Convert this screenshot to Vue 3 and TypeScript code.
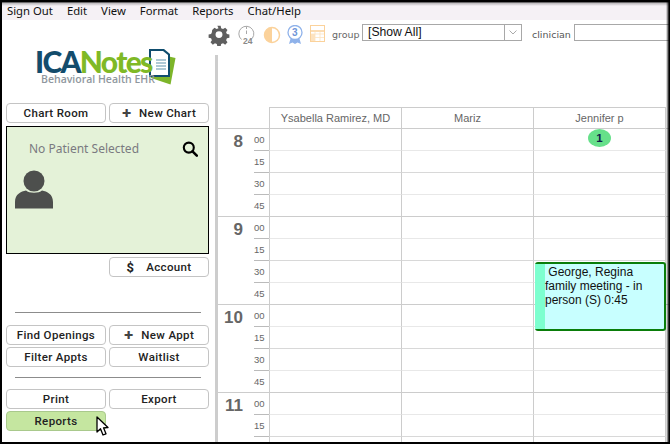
<script setup lang="ts">
const menus = ['Sign Out', 'Edit', 'View', 'Format', 'Reports', 'Chat/Help']
const doctors = ['Ysabella Ramirez, MD', 'Mariz', 'Jennifer p']
const hours = [8, 9, 10, 11]
const mins = ['00', '15', '30', '45']
function minLabel(h: number, m: string): string {
  return h === 11 && (m === '30' || m === '45') ? '' : m
}
</script>

<template>
  <div class="frame">
    <nav class="menubar">
      <span v-for="m in menus" :key="m" class="menu">{{ m }}</span>
    </nav>
    <div class="body">
      <aside class="side">
        <div class="logo">
          <div class="logo-words">
            <div class="logo-name"><span class="ica">ICA</span><span class="notes">Notes</span></div>
            <div class="logo-sub">Behavioral Health EHR</div>
          </div>
          <svg class="logo-doc" width="28" height="36" viewBox="0 0 28 36">
            <path d="M6 4 L27.500 9 L22.500 35.500 L3 29 Z" fill="#7db52a" />
            <path d="M1 0 H16 L22 5 V28 H1 Z" fill="#0f4d6e" />
            <path d="M3 2 H15 L20 6 V26 H3 Z" fill="#fff" />
            <path d="M8 11 H18 M8 14 H18 M8 17 H18 M8 20 H18" stroke="#5f93ad" stroke-width="1.200" />
          </svg>
        </div>
        <div class="btn-row">
          <button class="btn">Chart Room</button>
          <button class="btn"><span class="plus">✚</span>New Chart</button>
        </div>
        <section class="patient">
          <div class="patient-top">
            <span class="no-patient">No Patient Selected</span>
            <svg class="search" width="16" height="16" viewBox="0 0 16 16">
              <circle cx="6.800" cy="6.600" r="5" fill="none" stroke="#000" stroke-width="2.100" />
              <path d="M10.500 10.400 L14.800 14.600" stroke="#000" stroke-width="2.600" stroke-linecap="round" />
            </svg>
          </div>
          <svg class="avatar" width="38" height="39" viewBox="0 0 38 39">
            <circle cx="19" cy="11" r="10.500" fill="#4d4f4d" />
            <path d="M0 38.500 V32 C0 24 6 21.500 11 20.500 C14 23.500 24 23.500 27 20.500 C32 21.500 38 24 38 32 V38.500 Z" fill="#4d4f4d" />
          </svg>
        </section>
        <div class="btn-row account-row">
          <span class="spacer"></span>
          <button class="btn"><span class="dollar">$</span>Account</button>
        </div>
        <hr class="rule first-rule" />
        <div class="btn-row">
          <button class="btn">Find Openings</button>
          <button class="btn"><span class="plus">✚</span>New Appt</button>
        </div>
        <div class="btn-row tight">
          <button class="btn">Filter Appts</button>
          <button class="btn">Waitlist</button>
        </div>
        <hr class="rule second-rule" />
        <div class="btn-row">
          <button class="btn">Print</button>
          <button class="btn">Export</button>
        </div>
        <div class="btn-row tight">
          <button class="btn active">Reports</button>
          <span class="spacer"></span>
        </div>
      </aside>

      <main class="main">
        <div class="toolbar">
          <svg class="tool gear" width="22" height="22" viewBox="0 0 24 24">
            <path fill="#5f5f5f" fill-rule="evenodd" d="M10 1.500h4l.6 3 2.300 1 2.600-1.700 2.800 2.800-1.700 2.600 1 2.300 3 .6v4l-3 .6-1 2.300 1.700 2.600-2.800 2.800-2.600-1.700-2.300 1-.6 3h-4l-.6-3-2.300-1-2.600 1.700-2.800-2.800 1.700-2.600-1-2.300-3-.6v-4l3-.6 1-2.300L3.700 6.600l2.800-2.800 2.600 1.700 2.300-1zM12 8a4.200 4.200 0 1 0 0 8.400A4.200 4.200 0 0 0 12 8z" transform="translate(1.200 .6) scale(.9)" />
          </svg>
          <svg class="tool clock" width="17" height="19" viewBox="0 0 17 19">
            <path d="M12 15.300 A7.500 7.500 0 1 0 3.500 14.500" fill="none" stroke="#a8a8a8" stroke-width="1" />
            <path d="M8.500 1.500V4M8.500 5.500V9" stroke="#a8a8a8" stroke-width="1" />
            <text x="5" y="18.500" class="tiny24">24</text>
          </svg>
          <svg class="tool half" width="18" height="18" viewBox="0 0 18 18">
            <circle cx="9" cy="9" r="7.500" fill="#fff" stroke="#fbd29b" stroke-width="1.500" />
            <path d="M9 1.500 A7.500 7.500 0 0 0 9 16.500 Z" fill="#fbd29b" />
          </svg>
          <svg class="tool ribbon" width="16" height="20" viewBox="0 0 16 20">
            <path d="M4 12 L2 19 L5.500 17.500 L8 19 L10.500 17.500 L14 19 L12 12 Z" fill="#8fb2ea" />
            <circle cx="8" cy="7.500" r="7" fill="#fff" stroke="#8fb2ea" stroke-width="1.300" />
            <text x="5" y="11.300" class="tiny3">3</text>
          </svg>
          <svg class="tool cal" width="15" height="17" viewBox="0 0 15 17">
            <rect x=".5" y=".5" width="14" height="16" fill="#fff" stroke="#fbd29b" />
            <path d="M1 6H14" stroke="#fbd29b" stroke-width="1.500" />
            <rect x="1" y="9" width="4" height="7" fill="#fde3c0" />
            <path d="M1 9H14M1 12.500H14M5 7V16M10 7V16" stroke="#fde3c0" stroke-width=".8" />
          </svg>
          <label class="tool-label group-label">group</label>
          <div class="select">
            <span class="select-text">[Show All]</span>
            <span class="select-arrow">
              <svg width="8" height="5" viewBox="0 0 8 5"><path d="M.5.500 L4 4 L7.500.500" fill="none" stroke="#aaa" /></svg>
            </span>
          </div>
          <label class="tool-label clinician-label">clinician</label>
          <div class="clinician-input"></div>
        </div>

        <div class="calendar">
          <div class="vbar"></div>
          <div class="sched">
            <div class="head">
              <div class="head-gutter"></div>
              <div v-for="d in doctors" :key="d" class="head-cell">{{ d }}</div>
            </div>
            <div v-for="h in hours" :key="h" class="hour">
              <div class="hour-label">{{ h }}</div>
              <div class="slots">
                <div v-for="m in mins" :key="m" class="slot" :class="'m' + m">
                  <div class="min">{{ minLabel(h, m) }}</div>
                  <div v-for="d in doctors" :key="d" class="cell"></div>
                </div>
              </div>
            </div>
            <div class="badge">1</div>
            <div class="appt">
              <div class="appt-strip"></div>
              <div class="appt-text">&nbsp;George, Regina family meeting - in person (S) 0:45</div>
            </div>
          </div>
        </div>
      </main>
    </div>

    <svg class="cursor" width="14" height="21" viewBox="0 0 14 21">
      <path d="M1 1 V16 L4.500 12.800 L7 19 L10 17.800 L7.500 11.800 L12 11.500 Z" fill="#fff" stroke="#000" stroke-width="1.300" stroke-linejoin="round" />
    </svg>
    <div class="edge edge-top"></div>
    <div class="edge edge-right"></div>
    <div class="edge edge-bottom"></div>
    <div class="edge edge-left"></div>
  </div>
</template>

<style scoped>
.frame {
  position: relative;
  width: 670px;
  height: 444px;
  overflow: hidden;
  background: #fff;
  font-family: "Liberation Sans", Arial, sans-serif;
}
.menubar {
  display: flex;
  height: 20px;
  box-sizing: border-box;
  padding: 3px 0 0 7px;
  gap: 14px;
  background: #f5f1f5;
  font-family: "Noto Sans", sans-serif;
  font-size: 11.300px;
  line-height: 15px;
  color: #111;
}
.body {
  display: flex;
  height: 424px;
}
.side {
  width: 215px;
  flex: none;
  box-sizing: border-box;
  padding: 0 6px;
  display: flex;
  flex-direction: column;
}
.logo {
  height: 83px;
  box-sizing: border-box;
  padding: 29px 0 0 29px;
  display: flex;
  align-items: flex-start;
}
.logo-words {
  width: 113px;
  flex: none;
  position: relative;
  z-index: 1;
}
.logo-name {
  font-family: Lato, sans-serif;
  font-weight: 900;
  font-size: 30px;
  line-height: 24px;
  letter-spacing: -1.700px;
  height: 24px;
  white-space: nowrap;
}
.ica { color: #134c6c; }
.notes { color: #7fb926; }
.logo-sub {
  font-family: "Open Sans", sans-serif;
  font-size: 10.500px;
  line-height: 12px;
  color: #8f979e;
  font-weight: 600;
  padding-left: 6px;
  white-space: nowrap;
}
.logo-doc {
  margin: 0;
  flex: none;
}
.btn-row {
  display: flex;
  gap: 3px;
  height: 20px;
}
.btn-row > * {
  width: 100px;
  flex: none;
}
.tight {
  margin-top: 2px;
}
.spacer {
  display: block;
}
.btn {
  box-sizing: border-box;
  height: 20px;
  padding: 0;
  background: #fff;
  border: 1px solid #c4c4c4;
  border-radius: 4px;
  font-family: Roboto, sans-serif;
  font-weight: 500;
  font-size: 11.500px;
  letter-spacing: .35px;
  color: #222;
  display: flex;
  align-items: center;
  justify-content: center;
}
.plus {
  font-size: 11px;
  color: #444;
  margin-right: 8px;
}
.dollar {
  font-size: 13px;
  font-weight: 700;
  margin-right: 12px;
}
.active {
  background: #c5e6a0;
  border-color: #a9c98c;
}
.patient {
  box-sizing: border-box;
  margin-top: 3px;
  height: 128px;
  width: 203px;
  background: #e4f2d8;
  border: 1px solid #000;
  padding: 0 0 0 8px;
}
.patient-top {
  display: flex;
  justify-content: space-between;
  height: 30px;
  padding: 14px 10px 0 14px;
}
.no-patient {
  font-family: "Noto Sans", sans-serif;
  font-size: 12px;
  line-height: 16px;
  color: #7a7a80;
}
.avatar {
  display: block;
  margin-top: -1px;
}
.account-row {
  margin-top: 3px;
}
.rule {
  margin: 0 0 0 9px;
  width: 186px;
  height: 1px;
  border: 0;
  background: #8c8c8c;
}
.first-rule {
  margin-top: 35px;
  margin-bottom: 12px;
}
.second-rule {
  margin-top: 10px;
  margin-bottom: 11px;
}
.main {
  flex: 1;
  min-width: 0;
  display: flex;
  flex-direction: column;
}
.toolbar {
  height: 35px;
  box-sizing: border-box;
  padding-top: 3px;
  display: flex;
  align-items: flex-start;
}
.tool {
  flex: none;
}
.gear { margin: 1px 0 0 -7px; }
.clock { margin: 2px 0 0 8px; }
.half { margin: 3px 0 0 8px; }
.ribbon { margin: 2px 0 0 6px; }
.cal { margin: 2px 0 0 7px; }
.tiny24 {
  font: 700 8.500px "Liberation Sans", sans-serif;
  fill: #8a8a8a;
}
.tiny3 {
  font: 700 10px "Liberation Sans", sans-serif;
  fill: #6d94d8;
}
.tool-label {
  font-family: "DejaVu Sans", sans-serif;
  font-size: 9.500px;
  line-height: 14px;
  color: #666;
}
.group-label {
  margin: 5px 0 0 7px;
  width: 30px;
  flex: none;
}
.select {
  margin: 1px 0 0 0;
  width: 160px;
  height: 17px;
  flex: none;
  box-sizing: border-box;
  border: 1px solid #a8a8a8;
  display: flex;
  background: #fff;
}
.select-text {
  flex: 1;
  padding-left: 5px;
  font-family: "Liberation Sans", sans-serif;
  font-size: 12.200px;
  line-height: 15px;
  color: #111;
}
.select-arrow {
  width: 16px;
  border-left: 1px solid #a8a8a8;
  display: flex;
  align-items: center;
  justify-content: center;
}
.clinician-label {
  margin: 5px 0 0 10px;
  color: #555;
}
.clinician-input {
  margin: 1px 0 0 3px;
  flex: 1;
  height: 17px;
  box-sizing: border-box;
  border: 1px solid #a8a8a8;
}
.calendar {
  flex: 1;
  display: flex;
  min-height: 0;
  overflow: hidden;
}
.vbar {
  width: 3px;
  flex: none;
  background: #cdcdcd;
}
.sched {
  flex: 1;
  position: relative;
  padding-top: 52px;
}
.head {
  display: flex;
  height: 21px;
}
.head-gutter {
  width: 51px;
  flex: none;
}
.head-cell {
  width: 132px;
  box-sizing: border-box;
  flex: none;
  border: solid #ccc;
  border-width: 1px 0 0 1px;
  text-align: center;
  font-size: 11px;
  line-height: 20px;
  color: #666;
}
.head-cell:last-child {
  border-right: 1px solid #ccc;
  width: 133px;
}
.hour {
  display: flex;
  border-top: 1px solid #ccc;
}
.hour-label {
  width: 36px;
  flex: none;
  box-sizing: border-box;
  padding-right: 11px;
  text-align: right;
  font-weight: 700;
  font-size: 17px;
  line-height: 26px;
  color: #666;
}
.slots {
  flex: 1;
}
.slot {
  display: flex;
  height: 22px;
  box-sizing: border-box;
}
.m45 {
  height: 21px;
}
.min {
  width: 15px;
  flex: none;
  box-sizing: border-box;
  font-size: 9.500px;
  line-height: 21px;
  color: #666;
}
.m00 .min, .m15 .min, .m30 .min {
  border-bottom: 1px solid #bbb;
}
.cell {
  width: 132px;
  flex: none;
  box-sizing: border-box;
  border-left: 1px solid #ccc;
}
.m00 .cell, .m30 .cell {
  border-bottom: 1px solid #e8e8e8;
}
.m15 .cell {
  border-bottom: 1px solid #d8d8d8;
}
.cell:last-child {
  width: 133px;
  border-right: 1px solid #ccc;
}
.badge {
  position: absolute;
  left: 370px;
  top: 74px;
  width: 23px;
  height: 18px;
  border-radius: 50%;
  background: #66e08a;
  text-align: center;
  font-size: 11.500px;
  font-weight: 700;
  line-height: 18px;
  color: #10204a;
}
.appt {
  position: absolute;
  left: 317px;
  top: 207px;
  width: 131px;
  height: 69px;
  box-sizing: border-box;
  border: 2px solid #0a7d0a;
  border-left: 0;
  border-radius: 3px;
  background: #c8ffff;
  display: flex;
}
.appt-strip {
  width: 10px;
  flex: none;
  background: #7dffcf;
}
.appt-text {
  padding-top: 1px;
  padding-right: 10px;
  font-size: 12px;
  line-height: 14px;
  color: #111;
}
.cursor {
  position: absolute;
  left: 96px;
  top: 416px;
}
.edge {
  position: absolute;
  pointer-events: none;
}
.edge-top {
  left: 0;
  right: 0;
  top: 0;
  height: 6px;
  background: linear-gradient(to bottom, #000 0, #000 30%, rgba(0, 0, 0, .25) 50%, rgba(0, 0, 0, 0) 100%);
}
.edge-right {
  top: 0;
  bottom: 0;
  right: 0;
  width: 4px;
  background: linear-gradient(to right, rgba(0, 0, 0, 0), rgba(0, 0, 0, .6) 50%, #000 75%);
}
.edge-bottom {
  left: 0;
  right: 0;
  bottom: 0;
  height: 2px;
  background: #000;
}
.edge-left {
  top: 0;
  bottom: 0;
  left: 0;
  width: 2px;
  background: #000;
}
</style>
